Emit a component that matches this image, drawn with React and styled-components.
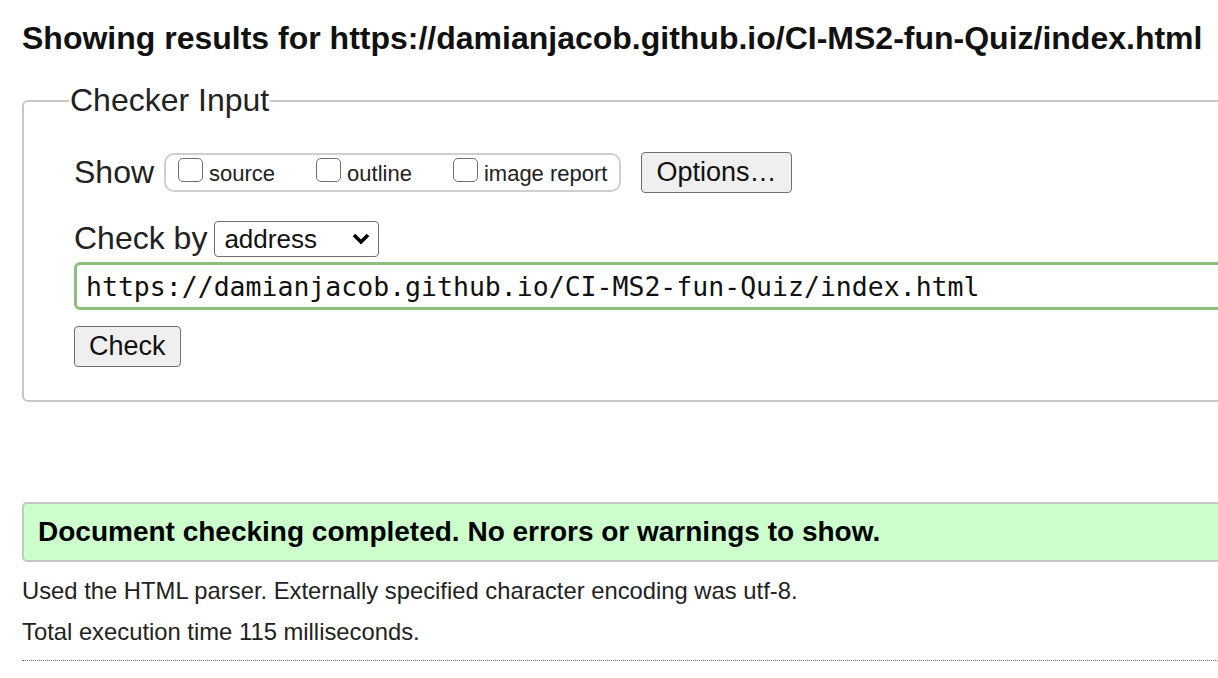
import React, { useState } from 'react';
import styled, { createGlobalStyle } from 'styled-components';

const Global = createGlobalStyle`
	html, body {
		margin: 0;
		padding: 0;
		background: #fff;
		overflow: hidden;
	}
	body {
		font-family: "Liberation Sans", Arial, sans-serif;
		color: #222;
	}
`

const Page = styled.div`
	width: 1240px;
	padding: 20px 0 0 22px;
`

const Title = styled.h2`
	margin: 0 0 26px;
	font-size: 32px;
	line-height: 36px;
	font-weight: bold;
	color: #111;
	white-space: nowrap;
`

const Fieldset = styled.fieldset`
	margin: 0;
	padding: 0 40px 33px 50px;
	border: 2px solid #c8c8c8;
	border-radius: 6px;
	width: 1240px;
	box-sizing: border-box;
`

const Legend = styled.legend`
	margin-left: -5px;
	padding: 0 1px;
	font-size: 32px;
	line-height: 37px;
	color: #222;
`

const Row = styled.div`
	display: flex;
	align-items: center;
	gap: ${p => p.$gap || 8}px;
	margin-top: ${p => p.$top || 0}px;
`

const Label = styled.span`
	font-size: 32px;
	line-height: 37px;
	color: #222;
`

const CheckGroup = styled.div`
	display: flex;
	align-items: center;
	gap: 41px;
	height: 39px;
	box-sizing: border-box;
	padding: 0 12px;
	border: 2px solid #cfcfcf;
	border-radius: 10px;
`

const CheckItem = styled.label`
	display: flex;
	align-items: center;
	gap: 6px;
	font-size: 22px;
	color: #222;
	padding-top: 3px;
`

const Box = styled.input`
	appearance: none;
	margin: 0;
	width: 25px;
	height: 24px;
	border: 1.5px solid #6f6f6f;
	border-radius: 5px;
	background: #fff;
	transform: translateY(-4px);
	&:checked {
		background: #2f6fd6;
	}
`

const Button = styled.button`
	font-family: "Liberation Sans", Arial, sans-serif;
	font-size: 27px;
	color: #111;
	background: #efefef;
	border: 1.5px solid #707070;
	border-radius: 4px;
	padding: 0 ${p => p.$pad || 14}px;
	height: 41px;
	margin-left: ${p => p.$left || 0}px;
	cursor: pointer;
`

const SelectWrap = styled.div`
	position: relative;
	display: inline-flex;
`

const Select = styled.select`
	appearance: none;
	width: 165px;
	height: 36px;
	font-family: "Liberation Sans", Arial, sans-serif;
	font-size: 26px;
	color: #111;
	background: #fff;
	border: 1.5px solid #707070;
	border-radius: 4px;
	padding: 0 0 0 9px;
`

const Chevron = styled.svg`
	position: absolute;
	right: 8px;
	top: 12px;
	pointer-events: none;
`

const UrlInput = styled.input`
	display: block;
	width: 1200px;
	height: 48px;
	box-sizing: border-box;
	margin: 5px 0 0 0;
	padding: 0 0 0 9px;
	font-family: "DejaVu Sans Mono", monospace;
	font-size: 26.5px;
	color: #111;
	border: 3px solid #8cbf7c;
	border-radius: 6px;
	outline: none;
`

const Result = styled.div`
	margin-top: 100px;
	width: 1240px;
	box-sizing: border-box;
	height: 60px;
	display: flex;
	align-items: center;
	padding-left: 14px;
	background: #ccffcc;
	border: 2px solid #c6c6c6;
	border-radius: 5px;
	font-size: 28px;
	font-weight: bold;
	color: #000;
`

const Note = styled.p`
	margin: ${p => p.$top || 0}px 0 0;
	font-size: 23.8px;
	line-height: 28px;
	color: #222;
`

const Rule = styled.hr`
	margin: 14px 0 0;
	width: 1240px;
	border: 0;
	border-top: 1px dotted #777;
`

export default function App() {
	const [url, setUrl] = useState('https://damianjacob.github.io/CI-MS2-fun-Quiz/index.html');
	const [by, setBy] = useState('address');
	return (
		<Page>
			<Global />
			<Title>Showing results for https://damianjacob.github.io/CI-MS2-fun-Quiz/index.html</Title>
			<Fieldset>
				<Legend>Checker Input</Legend>
				<Row $gap={10} $top={33}>
					<Label>Show</Label>
					<CheckGroup>
						<CheckItem><Box type="checkbox" />source</CheckItem>
						<CheckItem><Box type="checkbox" />outline</CheckItem>
						<CheckItem><Box type="checkbox" />image report</CheckItem>
					</CheckGroup>
					<Button $left={10}>Options…</Button>
				</Row>
				<Row $gap={7} $top={27}>
					<Label>Check by</Label>
					<SelectWrap>
						<Select value={by} onChange={e => setBy(e.target.value)}>
							<option value="address">address</option>
							<option value="upload">file upload</option>
							<option value="input">text input</option>
						</Select>
						<Chevron width="20" height="12" viewBox="0 0 20 12">
							<path d="M3 2 L10 9 L17 2" fill="none" stroke="#000" strokeWidth="3.6" />
						</Chevron>
					</SelectWrap>
				</Row>
				<UrlInput value={url} onChange={e => setUrl(e.target.value)} />
				<Row $top={16}>
					<Button>Check</Button>
				</Row>
			</Fieldset>
			<Result>Document checking completed. No errors or warnings to show.</Result>
			<Note $top={15}>Used the HTML parser. Externally specified character encoding was utf-8.</Note>
			<Note $top={13}>Total execution time 115 milliseconds.</Note>
			<Rule />
		</Page>
	);
}
